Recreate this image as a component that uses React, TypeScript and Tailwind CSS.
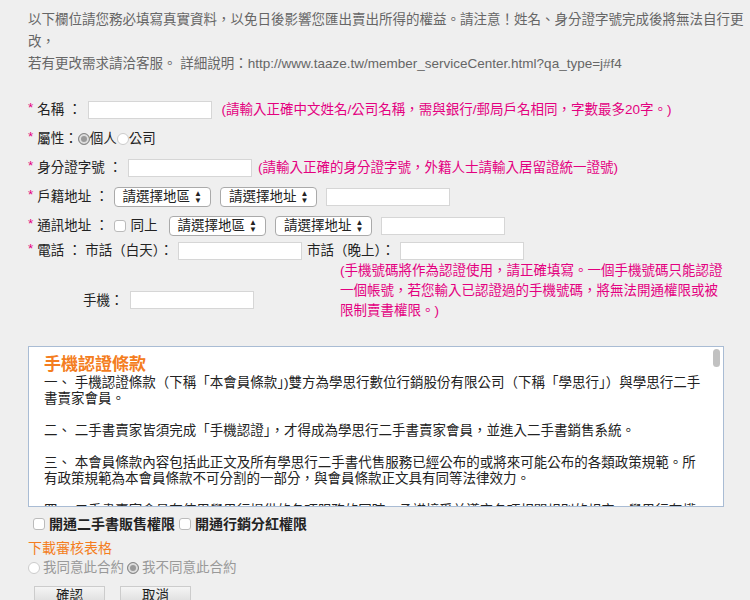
export default function App() {
  const pink = "text-[#e4007f]";
  const star = <span className="text-[#e4007f] mr-[4px] relative -top-[2px]">*</span>;
  const input = (w: string) => <span className={`inline-block ${w} h-[18px] bg-white border border-[#d6d6d6]`} />;
  const sel = (t: string) => (
    <span className="inline-flex items-center h-[20px] px-[8px] bg-white border border-[#aaa] rounded-[4px] text-[13.5px] text-[#222] mr-[4px]">
      {t}<span className="ml-[4px] text-[8px] leading-[7px] flex flex-col">▲<br/>▼</span>
    </span>
  );
  const radio = (on: boolean) => (
    <span className={`inline-block w-[12px] h-[12px] rounded-full border ${on ? "border-[#888] bg-[#999] shadow-[inset_0_0_0_2px_#ddd]" : "border-[#ccc] bg-white"}`} />
  );
  const cb = <span className="inline-block w-[12px] h-[12px] rounded-[3px] border border-[#bbb] bg-white" />;
  const row = "flex items-center h-[20px]";
  return (
    <div className="w-[750px] h-[600px] bg-[#efefef] text-[13.5px] text-[#222] overflow-hidden" style={{ fontFamily: '"Liberation Sans","Noto Sans CJK TC",sans-serif' }}>
      <div className="pl-[28px] pt-[9px] text-[#666] leading-[22px]">
        <div>以下欄位請您務必填寫真實資料，以免日後影響您匯出賣出所得的權益。請注意！姓名、身分證字號完成後將無法自行更改，</div>
        <div>若有更改需求請洽客服。 詳細說明：http://www.taaze.tw/member_serviceCenter.html?qa_type=j#f4</div>
      </div>
      <div className="pl-[28px] mt-[25px]">
        <div className={row}>{star}<span className="flex items-center gap-[6px]"><span>名稱 ：</span>{input("w-[124px]")}<span className={`${pink} ml-[4px]`}>(請輸入正確中文姓名/公司名稱，需與銀行/郵局戶名相同，字數最多20字。)</span></span></div>
        <div className={`${row} mt-[9px]`}>{star}<span>屬性：</span>{radio(true)}<span>個人</span>{radio(false)}<span>公司</span></div>
        <div className={`${row} mt-[9px]`}>{star}<span className="flex items-center gap-[6px]"><span>身分證字號 ：</span>{input("w-[124px]")}<span className={pink}>(請輸入正確的身分證字號，外籍人士請輸入居留證統一證號)</span></span></div>
        <div className={`${row} mt-[9px]`}>{star}<span className="flex items-center gap-[5px]"><span>戶籍地址 ：</span>{sel("請選擇地區")}{sel("請選擇地址")}{input("w-[124px]")}</span></div>
        <div className={`${row} mt-[9px]`}>{star}<span className="flex items-center gap-[5px]"><span>通訊地址 ：</span>{cb}<span className="mr-[6px]">同上</span>{sel("請選擇地區")}{sel("請選擇地址")}{input("w-[124px]")}</span></div>
        <div className={`${row} mt-[5px]`}>{star}<span className="flex items-center gap-[5px]"><span>電話 ： 市話（白天）：</span>{input("w-[124px]")}<span>市話（晚上）：</span>{input("w-[124px]")}</span></div>
        <div className="flex">
          <div className="w-[312px] pl-[55px] pt-[30px] flex items-start gap-[6px]"><span>手機：</span>{input("w-[124px]")}</div>
          <div className={`${pink} w-[390px] leading-[20px]`}>(手機號碼將作為認證使用，請正確填寫。一個手機號碼只能認證一個帳號，若您輸入已認證過的手機號碼，將無法開通權限或被限制賣書權限。)</div>
        </div>
      </div>
      <div className="ml-[28px] mt-[25px] w-[696px] h-[161px] bg-white border border-[#a9bcd4] flex overflow-hidden">
        <div className="flex-1 pl-[15px] pr-[6px] pt-[8px] leading-[16px] text-[#222]">
          <div className="text-[#f47d20] text-[17px] leading-[20px] font-bold">手機認證條款</div>
          <div>一、 手機認證條款（下稱「本會員條款」)雙方為學思行數位行銷股份有限公司（下稱「學思行」）與學思行二手書賣家會員。</div>
          <div className="mt-[16px]">二、 二手書賣家皆須完成「手機認證」，才得成為學思行二手書賣家會員，並進入二手書銷售系統。</div>
          <div className="mt-[16px]">三、 本會員條款內容包括此正文及所有學思行二手書代售服務已經公布的或將來可能公布的各類政策規範。所有政策規範為本會員條款不可分割的一部分，與會員條款正文具有同等法律效力。</div>
          <div className="mt-[16px]">四、 二手書賣家會員在使用學思行提供的各項服務的同時，承諾接受並遵守各項相關規則的規定。學思行有權根據需要</div>
        </div>
        <div className="w-[10px] pt-[2px] pr-[2px]"><div className="w-[7px] h-[18px] rounded-full bg-[#c1c1c1]" /></div>
      </div>
      <div className="pl-[33px] mt-[7px] flex items-center gap-[4px] text-[14px] font-bold h-[20px]">{cb}<span>開通二手書販售權限</span>{cb}<span>開通行銷分紅權限</span></div>
      <div className="pl-[28px] mt-[4px] text-[#f47d20] text-[14px] leading-[20px]">下載審核表格</div>
      <div className="pl-[28px] flex items-center gap-[3px] text-[#999] h-[20px]">{radio(false)}<span>我同意此合約</span>{radio(true)}<span>我不同意此合約</span></div>
      <div className="pl-[34px] mt-[8px] flex gap-[15px]">
        <span className="w-[71px] h-[21px] flex items-center justify-center bg-gradient-to-b from-[#f5f5f5] to-[#d8d8d8] border border-[#ccc]">確認</span>
        <span className="w-[71px] h-[21px] flex items-center justify-center bg-gradient-to-b from-[#f5f5f5] to-[#d8d8d8] border border-[#ccc]">取消</span>
      </div>
    </div>
  );
}
